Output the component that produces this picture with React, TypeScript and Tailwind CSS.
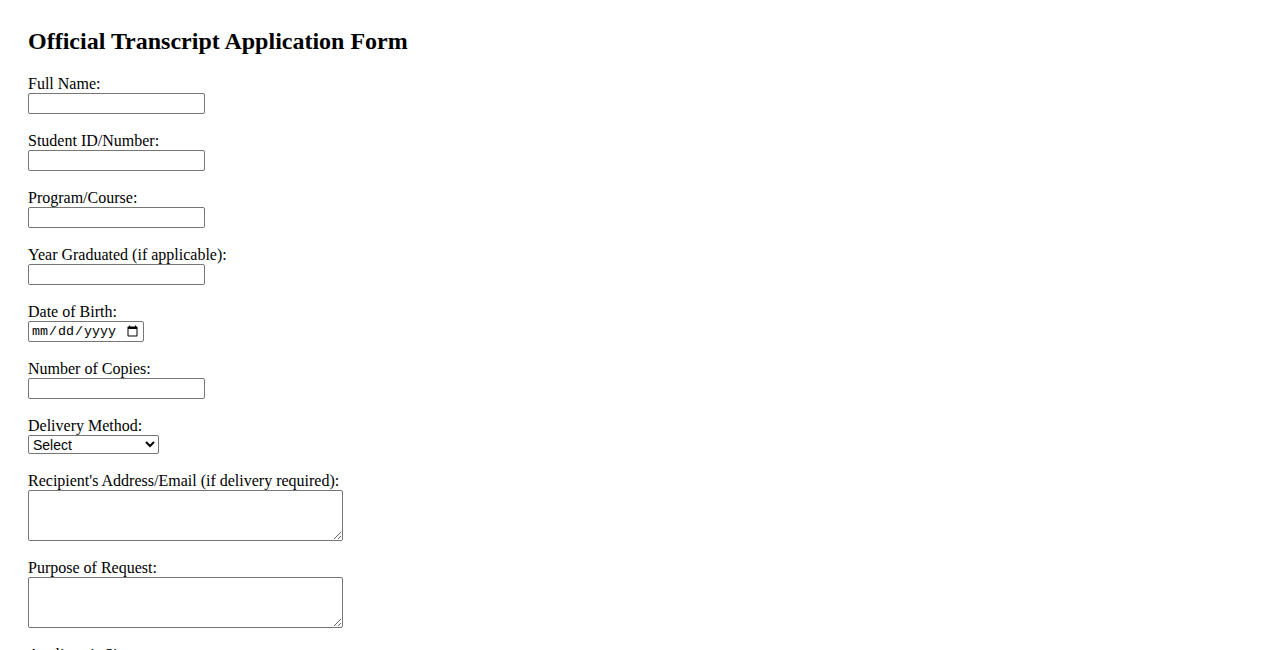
import React from "react";

const inputCls =
  "block w-[177px] h-[21px] border border-[#767676] rounded-[2px] bg-white px-[2px] text-[13.33px] font-['Liberation_Sans',Arial,sans-serif]";
const taCls =
  "block w-[315px] h-[51px] border border-[#767676] rounded-[2px] bg-white px-[2px] text-[13.33px] font-['Liberation_Mono',monospace]";

function Field({ label, children }: { label: string; children: React.ReactNode }) {
  return (
    <div className="flex flex-col">
      <label className="block leading-[19px] h-[19px]">{label}</label>
      {children}
    </div>
  );
}

export default function App() {
  return (
    <div className="min-h-screen bg-white text-black px-[28px] pt-[27px] pb-[40px] text-[16px] font-['Liberation_Serif','Times_New_Roman',serif]">
      <h2 className="text-[24px] font-bold leading-[28px] m-0">Official Transcript Application Form</h2>
      <form className="flex flex-col gap-[17px] mt-[19px]">
        <Field label="Full Name:">
          <input type="text" className={inputCls} />
        </Field>
        <Field label="Student ID/Number:">
          <input type="text" className={inputCls} />
        </Field>
        <Field label="Program/Course:">
          <input type="text" className={inputCls} />
        </Field>
        <Field label="Year Graduated (if applicable):">
          <input type="text" className={inputCls} />
        </Field>
        <Field label="Date of Birth:">
          <input
            type="date"
            className="block w-[116px] h-[21px] border border-[#767676] rounded-[2px] bg-white px-[2px] text-[13.33px] font-['Liberation_Mono',monospace]"
          />
        </Field>
        <Field label="Number of Copies:">
          <input type="number" className={inputCls} />
        </Field>
        <Field label="Delivery Method:">
          <select className="block w-[131px] h-[19px] border border-[#767676] rounded-[2px] bg-white text-[14px] font-['Liberation_Sans',Arial,sans-serif]">
            <option>Select</option>
            <option>Pickup</option>
            <option>Mail</option>
            <option>Email</option>
          </select>
        </Field>
        <Field label="Recipient's Address/Email (if delivery required):">
          <textarea className={taCls} />
        </Field>
        <Field label="Purpose of Request:">
          <textarea className={taCls} />
        </Field>
        <Field label="Applicant's Signature:">
          <input type="text" className={inputCls} />
        </Field>
      </form>
    </div>
  );
}
